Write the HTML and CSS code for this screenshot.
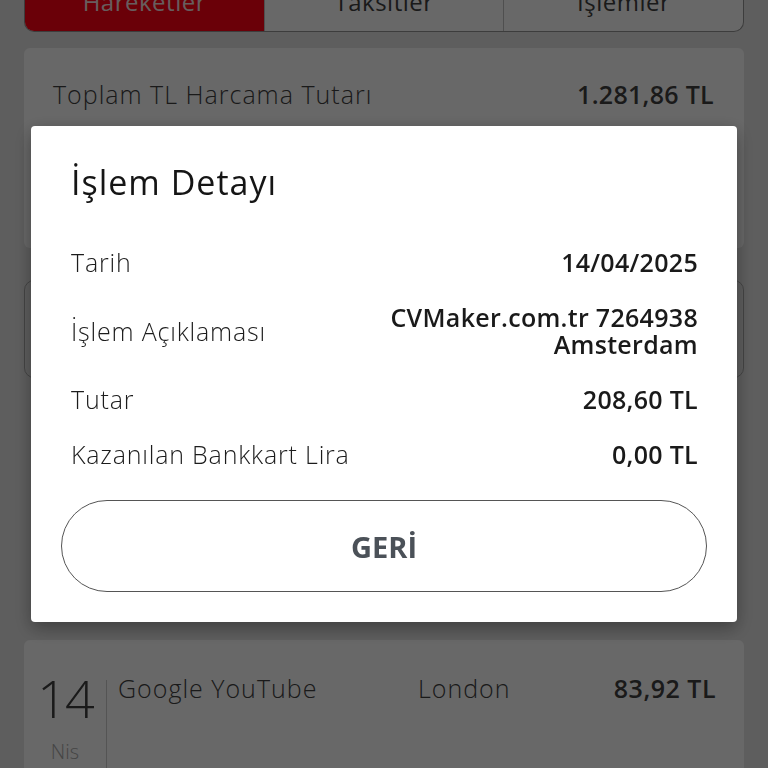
FILE: index.html
```html
<!DOCTYPE html>
<html lang="tr">
<head>
    <meta charset="UTF-8">
    <meta name="viewport" content="width=device-width, initial-scale=1.0">
    <title>İşlem Detayı</title>
    <link rel="stylesheet" href="styles.css">
</head>
<body>

    <div class="page">
        <div class="tabs">
            <div class="tab active">Hareketler</div>
            <div class="tab">Taksitler</div>
            <div class="tab">İşlemler</div>
        </div>

        <div class="summary">
            <div class="summary-row">
                <span>Toplam TL Harcama Tutarı</span>
                <strong>1.281,86 TL</strong>
            </div>
        </div>

        <div class="filter-box"></div>

        <div class="tx-card">
            <div class="tx-date">
                <span class="day">14</span>
                <span class="month">Nis</span>
            </div>
            <div class="tx-info">
                <span class="tx-name">Google YouTube</span>
                <span class="tx-city">London</span>
                <strong class="tx-amount">83,92 TL</strong>
            </div>
        </div>
    </div>

    <div class="backdrop">
        <div class="modal">
            <h2>İşlem Detayı</h2>
            <div class="detail-row">
                <span class="label">Tarih</span>
                <span class="value">14/04/2025</span>
            </div>
            <div class="detail-row">
                <span class="label">İşlem Açıklaması</span>
                <span class="value">CVMaker.com.tr 7264938<br>Amsterdam</span>
            </div>
            <div class="detail-row">
                <span class="label">Tutar</span>
                <span class="value">208,60 TL</span>
            </div>
            <div class="detail-row">
                <span class="label">Kazanılan Bankkart Lira</span>
                <span class="value">0,00 TL</span>
            </div>
            <button class="back-btn">GERİ</button>
        </div>
    </div>

</body>
</html>
```

FILE: styles.css
```css
body {
    margin: 0;
    font-family: "Open Sans", Lato, sans-serif;
    background-color: #d1d1d1;
    color: #3a3a3a;
}
.page {
    padding: 0 24px;
    height: 768px;
    overflow: hidden;
}
.tabs {
    display: flex;
    height: 60px;
    margin-top: -29px;
    border: 1.5px solid #888;
    border-top: none;
    border-radius: 0 0 10px 10px;
    overflow: hidden;
    font-size: 24px;
    letter-spacing: 0.5px;
    background-color: #e6e6e6;
}
.tab {
    flex: 1;
    display: flex;
    align-items: center;
    justify-content: center;
    color: #3a3a3a;
}
.tab + .tab {
    border-left: 1px solid #b0b0b0;
}
.tab.active {
    background-color: #ec0012;
    color: #e4cfd0;
}
.summary {
    margin-top: 16px;
    height: 200px;
    background-color: #e6e6e6;
    border-radius: 6px;
}
.summary-row {
    display: flex;
    justify-content: space-between;
    align-items: center;
    padding: 29px 30px 0 29px;
    font-size: 25px;
    font-weight: 300;
    letter-spacing: 1px;
}
.summary-row strong {
    font-weight: 600;
    letter-spacing: 0.3px;
}
.filter-box {
    margin-top: 32px;
    height: 96px;
    border: 1.5px solid #999;
    border-radius: 10px;
}
.tx-card {
    display: flex;
    margin-top: 262px;
    height: 200px;
    background-color: #e6e6e6;
    border-radius: 6px;
}
.tx-date {
    width: 82px;
    display: flex;
    flex-direction: column;
    align-items: center;
    margin-top: 40px;
    border-right: 1px solid #bbb;
}
.day {
    font-size: 52px;
    font-weight: 300;
    line-height: 48px;
    margin-top: -6px;
    letter-spacing: -2px;
}
.month {
    font-size: 20px;
    font-weight: 300;
    color: #999;
    margin-top: 16px;
}
.tx-info {
    flex: 1;
    display: flex;
    align-items: baseline;
    padding: 31px 28px 0 11px;
    font-size: 25px;
    font-weight: 300;
    letter-spacing: 1px;
}
.tx-name {
    width: 300px;
}
.tx-city {
    flex: 1;
}
.tx-amount {
    font-weight: 600;
    letter-spacing: 0.5px;
}
.backdrop {
    position: fixed;
    inset: 0;
    display: flex;
    justify-content: center;
    align-items: flex-start;
    background: rgba(0, 0, 0, 0.55);
}
.modal {
    margin-top: 126px;
    width: 706px;
    box-sizing: border-box;
    padding: 36px 39px 30px 40px;
    background: white;
    border-radius: 4px;
    box-shadow: 0 6px 18px rgba(0, 0, 0, 0.35);
}
.modal h2 {
    margin: 0 0 33px;
    font-size: 34px;
    line-height: 40px;
    font-weight: 500;
    letter-spacing: 1px;
    color: #151515;
}
.detail-row {
    display: flex;
    justify-content: space-between;
    align-items: center;
    padding: 14px 0;
    font-size: 25px;
    line-height: 27px;
}
.label {
    font-weight: 300;
    letter-spacing: 0.8px;
    color: #1c1c1c;
}
.value {
    text-align: right;
    font-weight: 600;
    letter-spacing: 0.3px;
    color: #1a1a1a;
}
.back-btn {
    display: block;
    width: calc(100% + 19px);
    margin: 18px -9px 0 -10px;
    height: 92px;
    border: 1.5px solid #555;
    border-radius: 46px;
    background: white;
    font-family: "Open Sans", sans-serif;
    font-size: 29px;
    font-weight: 700;
    color: #4b5158;
    cursor: pointer;
}
```
